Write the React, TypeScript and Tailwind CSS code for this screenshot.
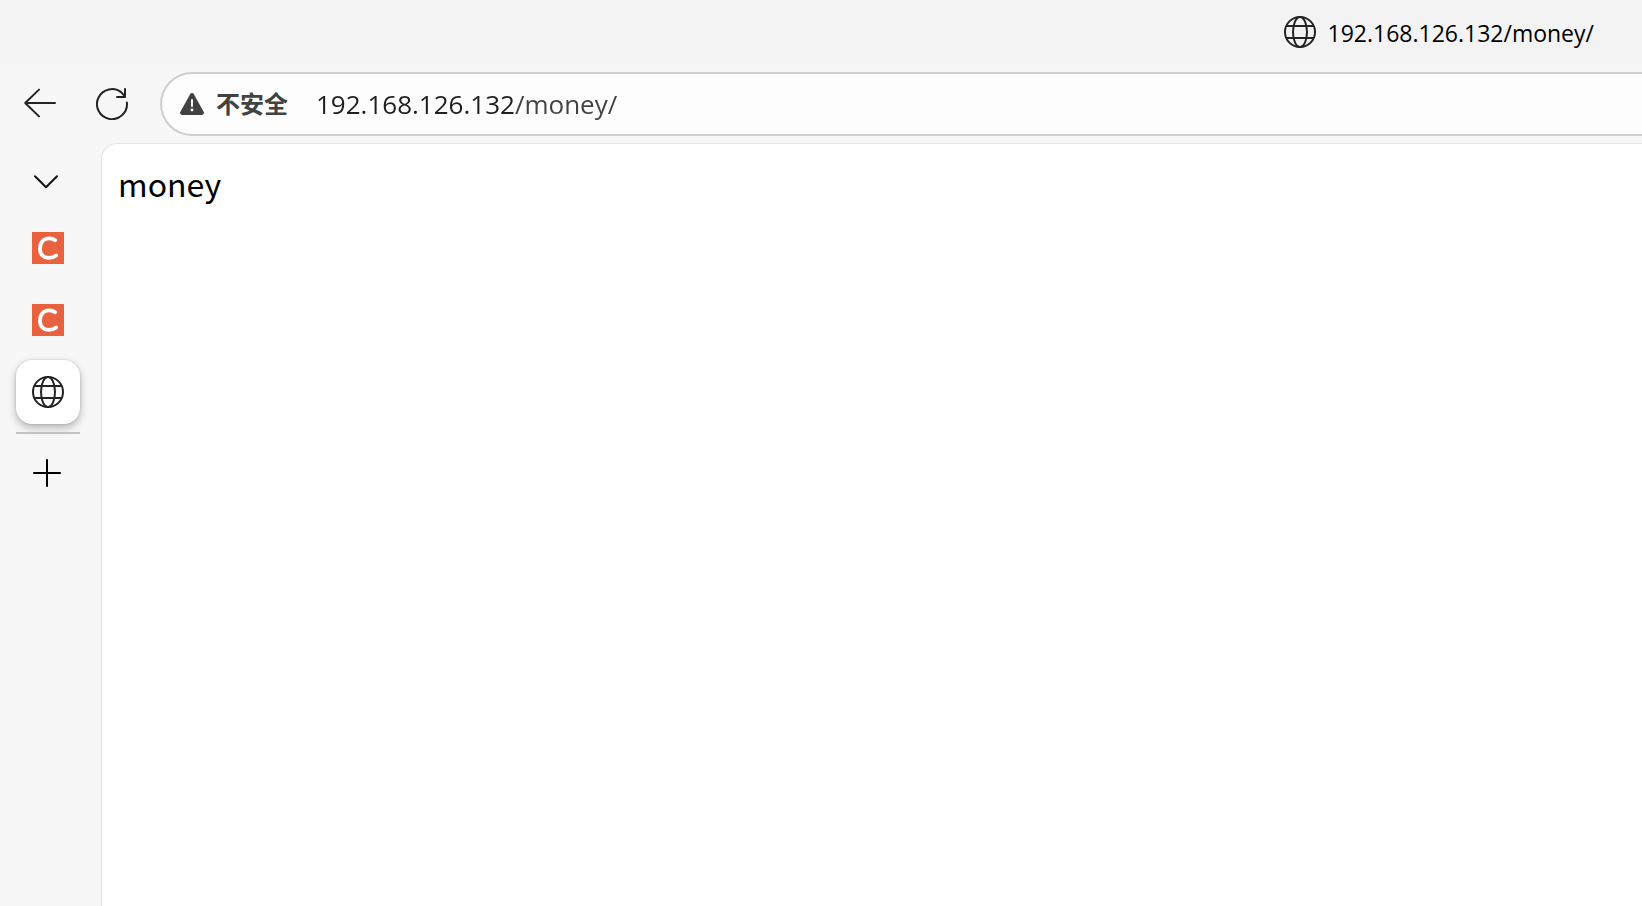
import { useState, type ReactNode } from 'react';

function GlobeIcon() {
  return (
    <svg viewBox="0 0 32 32" className="size-8 shrink-0" fill="none" stroke="#242424" strokeWidth="2" aria-hidden="true">
      <circle cx="16" cy="16" r="15" />
      <ellipse cx="16" cy="16" rx="7" ry="15" />
      <path d="M2.2 10h27.6M2.2 22h27.6" />
    </svg>
  );
}

function BackIcon() {
  return (
    <svg viewBox="0 0 32 32" className="size-8" fill="none" stroke="#242424" strokeWidth="2" strokeLinecap="round" strokeLinejoin="round" aria-hidden="true">
      <path d="M31 15H1.2M15 1.6 1.2 15 15 28.4" />
    </svg>
  );
}

function ReloadIcon() {
  return (
    <svg viewBox="0 0 32 32" className="size-8" fill="none" stroke="#242424" strokeWidth="2" strokeLinecap="round" strokeLinejoin="round" aria-hidden="true">
      <path d="M30.9 14.6A15 15 0 1 1 25.8 4.8L29 8.6" />
      <path d="M29 1v8h-8" />
    </svg>
  );
}

function ChevronIcon() {
  return (
    <svg viewBox="0 0 24 14" className="h-3.5 w-6" fill="none" stroke="#111" strokeWidth="2" strokeLinecap="round" strokeLinejoin="round" aria-hidden="true">
      <path d="M1 1.3 12 12.2 23 1.3" />
    </svg>
  );
}

function WarningIcon() {
  return (
    <svg viewBox="0 0 24 22" className="h-[22px] w-6 shrink-0" aria-hidden="true">
      <path d="M10.1 1.2a2.2 2.2 0 0 1 3.8 0l9.7 17.5a2.2 2.2 0 0 1-1.9 3.3H2.3a2.2 2.2 0 0 1-1.9-3.3z" fill="#424242" />
      <path d="M12 7v6" stroke="#fdfdfd" strokeWidth="2" strokeLinecap="round" />
      <circle cx="12" cy="17" r="1.4" fill="#fdfdfd" />
    </svg>
  );
}

function CursiveCIcon() {
  return (
    <svg viewBox="0 0 32 32" className="size-8" aria-hidden="true">
      <rect width="32" height="32" fill="#e9623f" />
      <path
        d="M23.2 8.2C21.5 6.9 19.6 6.3 17.3 6.3 11.5 6.3 8 10.6 8 17c0 5.5 3.5 8.8 8.8 8.8 3 0 5.5-.8 7.3-2.3"
        fill="none"
        stroke="#fff"
        strokeWidth="3.8"
        strokeLinecap="round"
      />
    </svg>
  );
}

function PlusIcon() {
  return (
    <svg viewBox="0 0 28 28" className="size-7" fill="none" stroke="#000" strokeWidth="2" strokeLinecap="round" aria-hidden="true">
      <path d="M14 1v26M1 14h26" />
    </svg>
  );
}

function SideButton({ label, active = false, children }: { label: string; active?: boolean; children: ReactNode }) {
  return (
    <button
      type="button"
      aria-label={label}
      aria-pressed={active}
      className={
        active
          ? 'flex size-16 items-center justify-center rounded-2xl bg-white shadow-[0_4px_8px_rgba(0,0,0,0.26),0_0_3px_rgba(0,0,0,0.16)]'
          : 'flex size-16 items-center justify-center rounded-2xl'
      }
    >
      {children}
    </button>
  );
}

export default function App() {
  const [address, setAddress] = useState('192.168.126.132/money/');

  return (
    <div className="flex min-h-screen flex-col overflow-hidden bg-[#f7f7f7] font-['Open_Sans','Noto_Sans_CJK_SC',sans-serif] text-black">
      <header className="flex h-16 items-center justify-end gap-3 bg-[#f3f3f3] pr-12">
        <GlobeIcon />
        <span className="pt-0.5 text-[23px] leading-8">192.168.126.132/money/</span>
      </header>

      <div className="flex items-center pt-2 pb-[7px]">
        <div className="flex w-40 shrink-0 items-center pl-2">
          <button type="button" aria-label="返回" className="flex size-16 items-center justify-center">
            <BackIcon />
          </button>
          <button type="button" aria-label="刷新" className="ml-2 flex size-16 items-center justify-center">
            <ReloadIcon />
          </button>
        </div>
        <div className="flex h-16 flex-1 items-center rounded-l-full border-2 border-r-0 border-[#cecece] bg-[#fdfdfd] pl-[18px]">
          <button type="button" className="flex shrink-0 items-center gap-3 text-2xl leading-8 font-bold text-[#424242]">
            <WarningIcon />
            不安全
          </button>
          <input
            type="text"
            aria-label="地址"
            value={address}
            onChange={(e) => setAddress(e.target.value)}
            className="ml-7 min-w-0 flex-1 bg-[linear-gradient(to_right,#1f1f1f_198px,#424242_198px)] bg-clip-text text-[26px] leading-10 text-transparent caret-black outline-none"
          />
        </div>
      </div>

      <div className="flex flex-1">
        <nav aria-label="标签页" className="flex w-[101px] shrink-0 flex-col items-start gap-2 pt-2 pl-4">
          <button type="button" aria-label="展开标签页" className="flex h-[57px] w-[60px] items-center justify-center pt-1">
            <ChevronIcon />
          </button>
          <SideButton label="标签页 1">
            <CursiveCIcon />
          </SideButton>
          <SideButton label="标签页 2">
            <CursiveCIcon />
          </SideButton>
          <SideButton label="192.168.126.132/money/" active>
            <GlobeIcon />
          </SideButton>
          <div className="h-0.5 w-16 bg-[#c4c4c4]" />
          <button type="button" aria-label="新建标签页" className="flex h-[62px] w-[62px] items-center justify-center">
            <PlusIcon />
          </button>
        </nav>
        <main className="flex-1 rounded-tl-2xl border-t border-l border-[#e4e4e4] bg-white px-4 pt-4 font-['Noto_Sans_CJK_SC',sans-serif]">
          <p className="text-[32px] leading-[46px]">money</p>
        </main>
      </div>
    </div>
  );
}
